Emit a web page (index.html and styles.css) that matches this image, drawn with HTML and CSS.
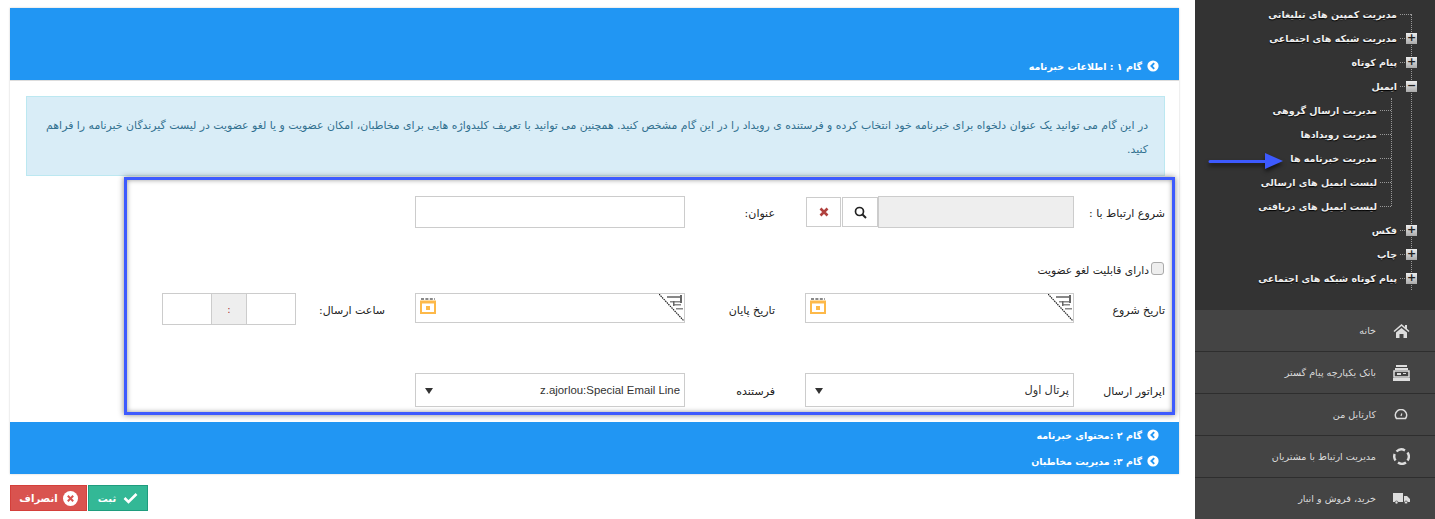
FILE: index.html
```html
<!DOCTYPE html>
<html lang="fa" dir="rtl">
<head>
<meta charset="utf-8">
<title>مدیریت خبرنامه ها</title>
<link rel="stylesheet" href="styles.css">
</head>
<body>
<svg class="defs" width="0" height="0" aria-hidden="true">
  <symbol id="chev" viewBox="0 0 12 12"><circle cx="6" cy="6" r="5.6" fill="#fff"/><path d="M7.2 3.2 4.4 6l2.8 2.8" fill="none" stroke="#2196f3" stroke-width="1.9"/></symbol>
  <symbol id="cal" viewBox="0 0 16 16"><path d="M1 1h14" stroke="#8a8a8a" stroke-width="2" stroke-dasharray="3 1.4"/><path d="M1 3.5h14v11.500H1z" fill="none" stroke="#fdb94a" stroke-width="2"/><path d="M1 3h14v2.500H1z" fill="#fdb94a"/><rect x="6" y="8" width="4" height="4" fill="#fdb94a"/></symbol>
  <symbol id="corner" viewBox="0 0 25 27"><path d="M0 0h25v27z" fill="#fff"/><path d="M0 0 25 27" stroke="#222" stroke-width="1.200" stroke-dasharray="1.500 .8"/><path d="M8 2h15v2H8zM11 7h12v1.500H11zM14 10h8v1.500h-8zM17 14h7v1.500h-7z" fill="#888"/><path d="M21 1h2v8h-2zM14 7h1.500v5H14z" fill="#666"/></symbol>
</svg>

<aside class="side">
  <nav class="tree">
    <div class="node"><span>مدیریت کمپین های تبلیغاتی</span></div>
    <div class="node has-box"><i class="toggle">+</i><span>مدیریت شبکه های اجتماعی</span></div>
    <div class="node has-box"><i class="toggle">+</i><span>پیام کوتاه</span></div>
    <div class="node has-box"><i class="toggle">−</i><span>ایمیل</span></div>
    <div class="sub">
      <div class="node"><span>مدیریت ارسال گروهی</span></div>
      <div class="node"><span>مدیریت رویدادها</span></div>
      <div class="node"><span>مدیریت خبرنامه ها</span></div>
      <div class="node"><span>لیست ایمیل های ارسالی</span></div>
      <div class="node"><span>لیست ایمیل های دریافتی</span></div>
    </div>
    <div class="node has-box"><i class="toggle">+</i><span>فکس</span></div>
    <div class="node has-box"><i class="toggle">+</i><span>چاپ</span></div>
    <div class="node has-box"><i class="toggle">+</i><span>پیام کوتاه شبکه های اجتماعی</span></div>
  </nav>
  <svg class="arrow" width="78" height="22" viewBox="0 0 78 22"><path d="M3 9h55V2l18 8-18 8v-6H3a1.500 1.500 0 0 1 0-3z" fill="#3d5afe"/></svg>
  <ul class="menu">
    <li><svg width="17" height="16" viewBox="0 0 17 16"><path d="M8.500 1 0.500 8l1 1 7-6 7 6 1-1-2.500-2.200V2h-2v2z" fill="#ddd"/><path d="M3 9.500 8.500 5l5.500 4.500V15h-3.500v-4h-4v4H3z" fill="#ddd"/></svg><span>خانه</span></li>
    <li><svg width="17" height="16" viewBox="0 0 17 16"><path d="M3 0h11v2H3zM2 3h13v2H2z" fill="#ddd"/><path d="M1 6h15v6H1z" fill="none" stroke="#ddd" stroke-width="1.500"/><path d="M4 8h4v2H4zM10 8h3v1h-3zM0 13h17v3H0z" fill="#ddd"/></svg><span>بانک یکپارچه پیام گستر</span></li>
    <li><svg class="gauge" width="14" height="11" viewBox="0 0 14 11"><path d="M2.500 9.500a5.600 5.600 0 1 1 9 0z" fill="none" stroke="#ddd" stroke-width="1.600"/><path d="m7 7 .8-2.500" stroke="#ddd" stroke-width="1.200"/></svg><span>کارتابل من</span></li>
    <li><svg width="17" height="17" viewBox="0 0 17 17"><g fill="none" stroke="#ddd" stroke-width="2.400"><path d="M3.500 3.500A7 7 0 0 1 12 2.500"/><path d="M14.500 4.500A7 7 0 0 1 14.500 12.500"/><path d="M13 14.500A7 7 0 0 1 5 14.500"/><path d="M2.500 12.500A7 7 0 0 1 1.700 6"/></g></svg><span>مدیریت ارتباط با مشتریان</span></li>
    <li><svg width="17" height="11" viewBox="0 0 17 11"><path d="M0 0h10v9H0zM11 3h3l3 3v3h-6z" fill="#ddd"/><circle cx="3.500" cy="9.500" r="1.500" fill="#ddd" stroke="#444" stroke-width=".7"/><circle cx="13" cy="9.500" r="1.500" fill="#ddd" stroke="#444" stroke-width=".7"/></svg><span>خرید، فروش و انبار</span></li>
  </ul>
</aside>

<main class="content">
  <section class="card">
    <header class="step step-first">
      <svg class="chev"><use href="#chev"/></svg>
      <span>گام ۱ : اطلاعات خبرنامه</span>
    </header>
    <div class="step-body">
      <p class="alert">در این گام می توانید یک عنوان دلخواه برای خبرنامه خود انتخاب کرده و فرستنده ی رویداد را در این گام مشخص کنید. همچنین می توانید با تعریف کلیدواژه هایی برای مخاطبان، امکان عضویت و یا لغو عضویت در لیست گیرندگان خبرنامه را فراهم کنید.</p>
      <form class="frame">
        <div class="row row-a">
          <label class="lbl">شروع ارتباط با :</label>
          <div class="lookup">
            <input class="ctl ctl-readonly" type="text" readonly>
            <button class="mini" type="button" aria-label="جستجو"><svg width="13" height="13" viewBox="0 0 13 13"><circle cx="5.500" cy="5.500" r="4" fill="none" stroke="#222" stroke-width="1.700"/><path d="m8.500 8.500 3.500 3.500" stroke="#222" stroke-width="2"/></svg></button>
            <button class="mini" type="button" aria-label="حذف"><svg width="10" height="10" viewBox="0 0 10 10"><path d="m1.500 1.500 7 7m0-7-7 7" stroke="#b0413e" stroke-width="2.600"/></svg></button>
          </div>
          <label class="lbl lbl-mid">عنوان:</label>
          <input class="ctl ctl-title" type="text">
        </div>
        <div class="row row-b">
          <label class="check"><input class="box" type="checkbox"><span>دارای قابلیت لغو عضویت</span></label>
        </div>
        <div class="row row-c">
          <label class="lbl">تاریخ شروع</label>
          <div class="date">
            <svg class="corner"><use href="#corner"/></svg>
            <svg class="cal"><use href="#cal"/></svg>
          </div>
          <label class="lbl lbl-mid">تاریخ پایان</label>
          <div class="date">
            <svg class="corner"><use href="#corner"/></svg>
            <svg class="cal"><use href="#cal"/></svg>
          </div>
          <label class="lbl lbl-mid">ساعت ارسال:</label>
          <div class="time">
            <input class="ctl" type="text">
            <span class="colon">:</span>
            <input class="ctl" type="text">
          </div>
        </div>
        <div class="row row-d">
          <label class="lbl">اپراتور ارسال</label>
          <div class="sel"><span>پرتال اول</span></div>
          <label class="lbl lbl-mid">فرستنده</label>
          <div class="sel"><span>z.ajorlou:Special Email Line</span></div>
        </div>
      </form>
    </div>
    <div class="steps-rest">
      <header class="step"><svg class="chev"><use href="#chev"/></svg><span>گام ۲ :محتوای خبرنامه</span></header>
      <header class="step"><svg class="chev"><use href="#chev"/></svg><span>گام ۳: مدیریت مخاطبان</span></header>
    </div>
  </section>
  <div class="actions">
    <button class="btn btn-save" type="button"><svg width="15" height="12" viewBox="0 0 15 12"><path d="m1.500 6 4 4 8-8" fill="none" stroke="#fff" stroke-width="2.600"/></svg><span>ثبت</span></button>
    <button class="btn btn-cancel" type="button"><svg width="15" height="15" viewBox="0 0 15 15"><circle cx="7.500" cy="7.500" r="7.500" fill="#fff"/><path d="m4.800 4.800 5.400 5.400m0-5.400-5.400 5.400" stroke="#d9534f" stroke-width="2"/></svg><span>انصراف</span></button>
  </div>
</main>
</body>
</html>
```
FILE: styles.css
```css
* { box-sizing: border-box; }
html, body { margin: 0; height: 519px; overflow: hidden; }
body {
  display: flex;
  direction: rtl;
  background: #fff;
  font-family: "DejaVu Sans", sans-serif;
  font-size: 10px;
  color: #222;
}
.defs { position: absolute; }

/* sidebar */
.side {
  position: relative;
  width: 240px;
  height: 519px;
  flex: none;
  background: #333;
  color: #eee;
}
.tree { position: relative; height: 310px; padding-top: 2px; font-weight: bold; font-size: 9.500px; }
.tree::before {
  content: "";
  position: absolute;
  top: 14px;
  right: 23px;
  height: 276px;
  border-right: 1px dotted #999;
}
.node {
  position: relative;
  display: flex;
  align-items: center;
  height: 24px;
  padding-right: 24px;
  white-space: nowrap;
  text-shadow: 0 1px 1px #000;
}
.node::before {
  content: "";
  width: 11px;
  margin-left: 3px;
  border-top: 1px dotted #999;
}
.toggle {
  position: absolute;
  right: 18px;
  top: 7px;
  width: 11px;
  height: 11px;
  background: linear-gradient(#eee, #aaa);
  color: #222;
  font: bold 11px/10px "DejaVu Sans", sans-serif;
  text-align: center;
  text-shadow: none;
}
.sub { position: relative; padding-right: 20px; }
.sub::before {
  content: "";
  position: absolute;
  top: 0;
  right: 43px;
  height: 108px;
  border-right: 1px dotted #999;
}
.arrow {
  position: absolute;
  top: 151px;
  left: 12px;
  filter: drop-shadow(0 3px 2px rgba(0, 0, 0, .6));
}
.menu { margin: 0; padding: 0; list-style: none; }
.menu li {
  display: flex;
  align-items: center;
  height: 42px;
  padding-right: 25px;
  gap: 17px;
  background: #444;
  border-bottom: 1px solid #2e2e2e;
  color: #ddd;
  font-size: 9.600px;
  white-space: nowrap;
}
.menu svg { flex: none; }
.menu .gauge { margin: 0 2px 0 1px; }

/* main column */
.content {
  width: 1169px;
  flex: none;
  margin: 8px 16px 0 0;
}
.card { background: #fff; box-shadow: 0 0 2px rgba(0, 0, 0, .2); }
.step {
  display: flex;
  align-items: center;
  gap: 5px;
  height: 26px;
  padding-right: 20px;
  background: #2196f3;
  color: #fff;
  font-weight: bold;
  font-size: 9.500px;
  white-space: nowrap;
}
.step-first { height: 72px; padding-top: 44px; }
.chev { width: 12px; height: 12px; flex: none; }
.step-body { height: 342px; padding: 15px 14px 0 3px; border-top: 1px solid #ddd; }
.alert {
  margin: 0 0 1px 13px;
  height: 80px;
  padding: 17px 16px 0;
  background: #d9edf7;
  border: 1px solid #bce8f1;
  color: #31708f;
  font-size: 10.900px;
  line-height: 24px;
}
.frame {
  height: 238px;
  margin: 0 -10px 0 111px;
  padding: 16px 7px 0 0;
  border: 3px solid #3d5afe;
  box-shadow: 0 0 6px #888, inset 0 0 5px #999;
  background: #fff;
}

/* form rows */
.row {
  display: grid;
  grid-template-columns: 91px 269px 120px 270px 119px 134px;
  align-items: center;
}
.row-a { height: 32px; }
.row-b { height: 16px; margin-top: 33px; }
.row-c { height: 32px; margin-top: 16px; }
.row-d { height: 34px; margin-top: 48px; }
.lbl { font-size: 11px; white-space: nowrap; padding-top: 2px; }
.lbl-mid { padding-right: 30px; }
.ctl {
  display: block;
  width: 100%;
  height: 100%;
  margin: 0;
  padding: 0;
  border: 1px solid #ccc;
  border-radius: 0;
  background: #fff;
  outline: 0;
}
.ctl-readonly { background: #eee; flex: 1; min-width: 0; }
.ctl-title { height: 32px; }
.lookup { display: flex; height: 32px; }
.mini {
  width: 36px;
  height: 30px;
  margin: 1px 0 0;
  padding: 0;
  display: flex;
  align-items: center;
  justify-content: center;
  border: 1px solid #ccc;
  background: #fff;
}
.mini + .mini { margin-right: 1px; margin-left: 1px; width: 35px; }
.check {
  grid-column: 1 / 3;
  display: flex;
  align-items: flex-start;
  gap: 2px;
  white-space: nowrap;
  font-size: 10.700px;
}
.box {
  width: 13px;
  height: 13px;
  margin: 0 1px 0 0;
  appearance: none;
  background: #eee;
  border: 1px solid #aaa;
  border-radius: 3px;
}
.check span { margin-top: 2px; }
.date {
  position: relative;
  display: flex;
  align-items: center;
  align-self: start;
  height: 30px;
  border: 1px solid #ccc;
  justify-content: flex-end;
}
.cal { width: 16px; height: 16px; margin-left: 4px; margin-top: -4px; }
.corner { position: absolute; top: 0; right: 0; width: 25px; height: 27px; }
.time { display: flex; height: 32px; }
.time .ctl { flex: 1; min-width: 0; }
.colon {
  width: 34px;
  flex: none;
  display: flex;
  align-items: center;
  justify-content: center;
  background: #eee;
  border: 1px solid #ccc;
  border-width: 1px 0;
  color: #a33;
}
.sel {
  position: relative;
  display: flex;
  align-items: center;
  height: 34px;
  padding-right: 4px;
  border: 1px solid #ccc;
  color: #333;
  font-family: "Liberation Sans", "DejaVu Sans", sans-serif;
  font-size: 11.400px;
}
.sel::after {
  content: "";
  position: absolute;
  top: 14px;
  left: 9px;
  border: 4px solid transparent;
  border-top: 6px solid #333;
  border-bottom: 0;
}

/* buttons */
.actions { display: flex; direction: ltr; gap: 1px; margin-top: 11px; }
.btn {
  display: flex;
  align-items: center;
  justify-content: center;
  height: 26px;
  padding: 0;
  color: #fff;
  font: bold 10px "DejaVu Sans", sans-serif;
  border: 1px solid;
  border-radius: 0;
}
.btn-cancel { order: 1; width: 77px; gap: 5px; background: #d9534f; border-color: #d43f3a; }
.btn-save { order: 2; width: 60px; gap: 7px; background: #33b896; border-color: #1f9c7e; }
.btn-cancel svg, .btn-save svg { order: 2; }
```
